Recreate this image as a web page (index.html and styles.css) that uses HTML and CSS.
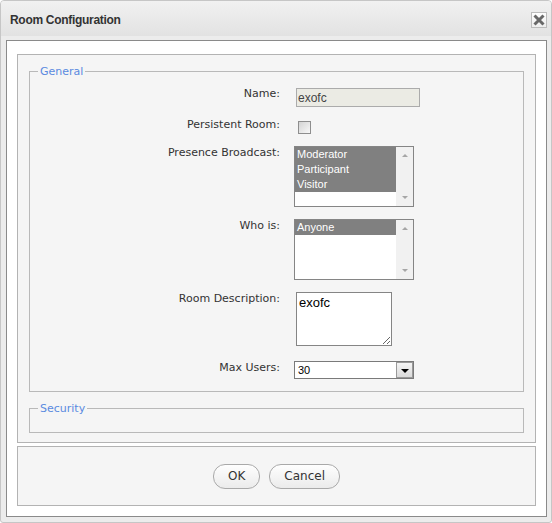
FILE: index.html
```html
<!DOCTYPE html>
<html lang="en">
<head>
<meta charset="utf-8">
<title>Room Configuration</title>
<link rel="stylesheet" href="styles.css">
</head>
<body>
<div class="window">
  <div class="titlebar">
    <span class="title">Room Configuration</span>
    <button class="close" aria-label="Close">
      <svg width="12" height="12" viewBox="0 0 12 12"><path d="M1.5 1.5L10.5 10.5M10.5 1.5L1.5 10.5" stroke="#686868" stroke-width="3"/></svg>
    </button>
  </div>
  <div class="content">
    <div class="panel main">
      <fieldset class="group general">
        <legend>General</legend>
        <div class="form">
          <label class="lbl up">Name:</label>
          <div><input class="text" type="text" value="exofc" readonly></div>

          <label class="lbl up">Persistent Room:</label>
          <div><input class="check" type="checkbox"></div>

          <label class="lbl">Presence Broadcast:</label>
          <div class="listbox">
            <div class="options">
              <div class="opt sel">Moderator</div>
              <div class="opt sel">Participant</div>
              <div class="opt sel">Visitor</div>
            </div>
            <div class="vscroll">
              <span class="sbtn"><span class="tri-up"></span></span>
              <span class="sbtn"><span class="tri-down"></span></span>
            </div>
          </div>

          <label class="lbl">Who is:</label>
          <div class="listbox">
            <div class="options">
              <div class="opt sel">Anyone</div>
            </div>
            <div class="vscroll">
              <span class="sbtn"><span class="tri-up"></span></span>
              <span class="sbtn"><span class="tri-down"></span></span>
            </div>
          </div>

          <label class="lbl">Room Description:</label>
          <div><textarea class="area">exofc</textarea></div>

          <label class="lbl down">Max Users:</label>
          <div class="dropdown">
            <span class="dd-value">30</span>
            <span class="dd-btn"><span class="tri-black"></span></span>
          </div>
        </div>
      </fieldset>
      <fieldset class="group security">
        <legend>Security</legend>
      </fieldset>
    </div>
    <div class="panel buttons">
      <button class="btn">OK</button>
      <button class="btn">Cancel</button>
    </div>
  </div>
</div>
</body>
</html>
```

FILE: styles.css
```css
* { box-sizing: border-box; }

body {
  margin: 0;
  font-family: "DejaVu Sans", sans-serif;
  background: #fff;
}

.window {
  width: 552px;
  height: 523px;
  border: 1px solid #c6c6c6;
  border-radius: 4px 4px 3px 3px;
  background: #ececec;
  display: flex;
  flex-direction: column;
  overflow: hidden;
}

.titlebar {
  height: 35px;
  flex: none;
  display: flex;
  justify-content: space-between;
  align-items: flex-start;
  padding: 0 4px 0 9px;
  background: linear-gradient(#f1f1f1, #e2e2e2);
}

.title {
  margin-top: 12px;
  font: bold 12px/14px "Liberation Sans", Arial, sans-serif;
  letter-spacing: -0.3px;
  color: #333;
}

.close {
  margin-top: 11px;
  width: 16px;
  height: 16px;
  padding: 0;
  border: 1px solid #bcbcbc;
  background: linear-gradient(#fefefe, #eeeeee);
  display: flex;
  align-items: center;
  justify-content: center;
}

.content {
  flex: 1;
  margin: 4px 4px 5px 5px;
  border: 1px solid #8a8a8a;
  background: #fff;
  padding: 13px 10px 10px;
  display: flex;
  flex-direction: column;
  gap: 3px;
}

.panel {
  border: 1px solid #b3b3b3;
  background: #f5f5f5;
}

.main {
  flex: 1;
  padding: 8px 11px 9px;
  display: flex;
  flex-direction: column;
  gap: 8px;
}

.group {
  margin: 0;
  min-width: 0;
  border: 1px solid #b9b9b9;
  padding: 9px 0 12px;
}

.group legend {
  margin-left: 8px;
  padding: 2px 2px 0;
  font: 11px/14px "DejaVu Sans", sans-serif;
  color: #5a8ae0;
}

.security {
  padding: 0 0 16px;
}

.form {
  display: grid;
  grid-template-columns: 250px 1fr;
  column-gap: 14px;
  row-gap: 12px;
  align-items: start;
}

.lbl {
  font: 11px/13px "DejaVu Sans", sans-serif;
  color: #333;
  text-align: right;
}

.lbl.up { margin-top: -1px; }
.lbl.down { margin-top: 3px; }

.text {
  display: block;
  width: 124px;
  height: 19px;
  margin: 0 0 0 2px;
  border: 1px solid #ababab;
  background: #ebebe4;
  padding: 0 1px;
  font: 12px "Liberation Sans", Arial, sans-serif;
  color: #444;
  outline: none;
}

.check {
  display: block;
  appearance: none;
  -webkit-appearance: none;
  width: 13px;
  height: 13px;
  margin: 2px 0 0 4px;
  border: 1px solid #8e8e8e;
  background: linear-gradient(135deg, #d4d4d4, #f8f8f8);
}

.listbox {
  width: 120px;
  height: 61px;
  border: 1px solid #858585;
  background: #fff;
  display: flex;
}

.options {
  flex: 1;
}

.opt {
  height: 15px;
  padding-left: 2px;
  font: 11px/15px "Liberation Sans", Arial, sans-serif;
  color: #000;
}

.opt.sel {
  background: #808080;
  color: #fff;
}

.vscroll {
  width: 17px;
  background: #f1f1f1;
  display: flex;
  flex-direction: column;
  justify-content: space-between;
}

.sbtn {
  height: 17px;
  display: flex;
  align-items: center;
  justify-content: center;
}

.tri-up {
  width: 0;
  height: 0;
  border-left: 3px solid transparent;
  border-right: 3px solid transparent;
  border-bottom: 3px solid #a6a6a6;
}

.tri-down {
  width: 0;
  height: 0;
  border-left: 3px solid transparent;
  border-right: 3px solid transparent;
  border-top: 3px solid #a6a6a6;
}

.area {
  display: block;
  width: 96px;
  height: 54px;
  margin: 0 0 0 2px;
  border: 1px solid #858585;
  padding: 2px;
  font: 13px "Liberation Sans", Arial, sans-serif;
  color: #000;
  background: #fff;
  resize: both;
  outline: none;
}

.dropdown {
  width: 120px;
  height: 18px;
  margin-top: 3px;
  border: 1px solid #7a7a7a;
  background: #fff;
  display: flex;
}

.dd-value {
  flex: 1;
  padding-left: 3px;
  font: 11px/16px "Liberation Sans", Arial, sans-serif;
  color: #000;
}

.dd-btn {
  width: 17px;
  height: 16px;
  border: 1px solid #999;
  background: linear-gradient(#f4f4f4, #dadada);
  display: flex;
  align-items: center;
  justify-content: center;
}

.tri-black {
  width: 0;
  height: 0;
  margin-top: 1px;
  border-left: 4px solid transparent;
  border-right: 4px solid transparent;
  border-top: 4px solid #000;
}

.buttons {
  height: 60px;
  flex: none;
  display: flex;
  justify-content: center;
  align-items: center;
  gap: 9px;
}

.btn {
  height: 25px;
  padding: 0 14px;
  border: 1px solid #a9a9a9;
  border-radius: 12px;
  background: linear-gradient(#fefefe, #ebebeb);
  font: 12px "DejaVu Sans", sans-serif;
  color: #333;
}
```
